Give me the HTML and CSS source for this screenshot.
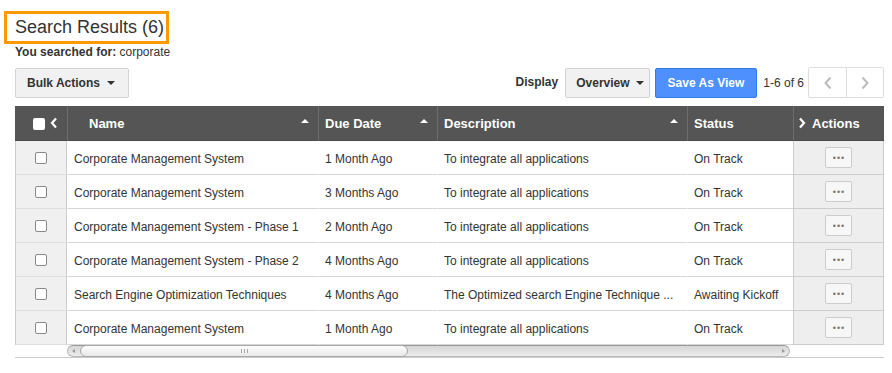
FILE: index.html
```html
<!DOCTYPE html>
<html lang="en">
<head>
  <meta charset="UTF-8" />
  <title>Search Results</title>
  <link rel="stylesheet" href="styles.css">
</head>
<body>
  <div class="title-row">
    <h1 class="title">Search Results (6)</h1>
  </div>
  <p class="searched"><b>You searched for:</b> corporate</p>

  <div class="toolbar">
    <button class="btn btn-bulk">Bulk Actions <span class="caret"></span></button>
    <div class="toolbar-right">
      <span class="display-label">Display</span>
      <button class="btn btn-view">Overview <span class="caret"></span></button>
      <button class="btn btn-blue">Save As View</button>
      <span class="count">1-6 of 6</span>
      <div class="pager">
        <button class="pager-btn"><svg width="10" height="14" viewBox="0 0 10 14"><path d="M7.5 1.5 L2.5 7 L7.5 12.5" fill="none" stroke="#bbb" stroke-width="2"/></svg></button>
        <button class="pager-btn"><svg width="10" height="14" viewBox="0 0 10 14"><path d="M2.5 1.5 L7.5 7 L2.5 12.5" fill="none" stroke="#bbb" stroke-width="2"/></svg></button>
      </div>
    </div>
  </div>

  <div class="grid">
    <div class="th th-check">
      <span class="head-box"></span>
      <svg width="8" height="12" viewBox="0 0 8 12"><path d="M6 1.5 L2 6 L6 10.5" fill="none" stroke="#fff" stroke-width="2.2"/></svg>
    </div>
    <div class="th th-name">Name <span class="sort"></span></div>
    <div class="th">Due Date <span class="sort"></span></div>
    <div class="th">Description <span class="sort"></span></div>
    <div class="th">Status</div>
    <div class="th th-actions">
      <svg width="8" height="12" viewBox="0 0 8 12"><path d="M2 1.5 L6 6 L2 10.5" fill="none" stroke="#fff" stroke-width="2.2"/></svg>
      Actions
    </div>

    <div class="td td-check"><span class="box"></span></div>
    <div class="td">Corporate Management System</div>
    <div class="td">1 Month Ago</div>
    <div class="td">To integrate all applications</div>
    <div class="td">On Track</div>
    <div class="td td-actions"><span class="dots">&bull;&bull;&bull;</span></div>

    <div class="td td-check"><span class="box"></span></div>
    <div class="td">Corporate Management System</div>
    <div class="td">3 Months Ago</div>
    <div class="td">To integrate all applications</div>
    <div class="td">On Track</div>
    <div class="td td-actions"><span class="dots">&bull;&bull;&bull;</span></div>

    <div class="td td-check"><span class="box"></span></div>
    <div class="td">Corporate Management System - Phase 1</div>
    <div class="td">2 Month Ago</div>
    <div class="td">To integrate all applications</div>
    <div class="td">On Track</div>
    <div class="td td-actions"><span class="dots">&bull;&bull;&bull;</span></div>

    <div class="td td-check"><span class="box"></span></div>
    <div class="td">Corporate Management System - Phase 2</div>
    <div class="td">4 Months Ago</div>
    <div class="td">To integrate all applications</div>
    <div class="td">On Track</div>
    <div class="td td-actions"><span class="dots">&bull;&bull;&bull;</span></div>

    <div class="td td-check"><span class="box"></span></div>
    <div class="td">Search Engine Optimization Techniques</div>
    <div class="td">4 Months Ago</div>
    <div class="td">The Optimized search Engine Technique ...</div>
    <div class="td">Awaiting Kickoff</div>
    <div class="td td-actions"><span class="dots">&bull;&bull;&bull;</span></div>

    <div class="td td-check"><span class="box"></span></div>
    <div class="td">Corporate Management System</div>
    <div class="td">1 Month Ago</div>
    <div class="td">To integrate all applications</div>
    <div class="td">On Track</div>
    <div class="td td-actions"><span class="dots">&bull;&bull;&bull;</span></div>
  </div>

  <div class="scroll-row">
    <div class="scrollbar">
      <span class="sb-arrow sb-left"></span>
      <div class="sb-thumb"><span class="grip"></span></div>
      <span class="sb-arrow sb-right"></span>
    </div>
  </div>
</body>
</html>
```

FILE: styles.css
```css
* {
  margin: 0;
  padding: 0;
  box-sizing: border-box;
}

body {
  font-family: "Liberation Sans", Arial, sans-serif;
  color: #333;
  background: #fff;
  padding: 0 8px 0 15px;
}

.title-row {
  padding-top: 11px;
  margin-left: -11px;
}

.title {
  display: inline-block;
  font-size: 18px;
  font-weight: normal;
  line-height: 27px;
  border: 3px solid #ff9900;
  padding: 0 2px 0 8px;
}

.searched {
  font-size: 12px;
  line-height: 15px;
  margin-top: 1px;
}

.toolbar {
  display: flex;
  justify-content: space-between;
  align-items: center;
  margin-top: 7px;
  width: 869px;
}

.toolbar-right {
  display: flex;
  align-items: center;
}

.btn {
  height: 30px;
  font-family: inherit;
  font-size: 12px;
  font-weight: bold;
  color: #333;
  background: #f1f1f1;
  border: 1px solid #d3d3d3;
  border-radius: 2px;
  padding: 0 10px;
  display: flex;
  align-items: center;
  gap: 7px;
}

.btn-bulk {
  padding: 0 13px 0 11px;
}

.btn-view {
  padding: 0 5px 0 10px;
  gap: 6px;
}

.caret {
  width: 0;
  height: 0;
  border-left: 4px solid transparent;
  border-right: 4px solid transparent;
  border-top: 4px solid #333;
}

.display-label {
  font-size: 12px;
  font-weight: bold;
  margin-right: 7px;
  margin-top: -2px;
}

.btn-blue {
  background: #4d90fe;
  border-color: #3079ed;
  color: #fff;
  padding: 0 12px;
  margin-left: 5px;
}

.count {
  font-size: 12px;
  margin: 0 4px 0 6px;
}

.pager {
  display: flex;
  border: 1px solid #ddd;
  border-radius: 2px;
}

.pager-btn {
  width: 37px;
  height: 29px;
  background: #fff;
  border: none;
  display: flex;
  align-items: center;
  justify-content: center;
}

.pager-btn + .pager-btn {
  border-left: 1px solid #ddd;
}

.grid {
  display: grid;
  grid-template-columns: 52px 251px 119px 250px 106px 91px;
  grid-auto-rows: 34px;
  grid-template-rows: 35px;
  margin-top: 8px;
  width: 869px;
  font-size: 12px;
}

.th {
  background: #555;
  color: #fff;
  font-weight: bold;
  font-size: 13px;
  display: flex;
  align-items: center;
  padding: 0 6px;
  border-left: 1px solid #6e6e6e;
  border-bottom: 1px solid #4a4a4a;
}

.th:first-child {
  border-left: none;
}

.th-check {
  justify-content: center;
  gap: 5px;
  padding-left: 14px;
}

.head-box {
  width: 12px;
  height: 12px;
  background: #fff;
  border-radius: 2px;
  margin-top: 2px;
}

.th-name {
  padding-left: 21px;
}

.sort {
  margin-left: auto;
  width: 0;
  height: 0;
  border-left: 4px solid transparent;
  border-right: 4px solid transparent;
  border-bottom: 4px solid #fff;
  margin-right: 3px;
  margin-top: -4px;
}

.th-actions {
  gap: 6px;
  padding-left: 4px;
}

.td {
  display: flex;
  align-items: center;
  padding: 2px 6px 0;
  border-bottom: 1px solid #d6d6d6;
  border-left: 1px solid #fff;
  white-space: nowrap;
  overflow: hidden;
}

.td-check {
  background: #f0f0f0;
  justify-content: center;
  padding-top: 0;
  border-left: 1px solid #ccc;
  border-right: 1px solid #ccc;
  border-bottom-color: #ddd;
}

.box {
  width: 12px;
  height: 12px;
  border: 1px solid #888;
  border-radius: 2px;
  background: #fff;
}

.td-actions {
  background: #eee;
  justify-content: center;
  padding-top: 0;
  border-left: 1px solid #ccc;
  border-right: 1px solid #ccc;
  border-bottom-color: #ccc;
}

.dots {
  width: 27px;
  height: 21px;
  background: #f7f7f7;
  border: 1px solid #ccc;
  border-radius: 2px;
  font-size: 9px;
  color: #777;
  letter-spacing: 1px;
  padding-left: 1px;
  display: flex;
  align-items: center;
  justify-content: center;
}

.scroll-row {
  width: 869px;
  height: 13px;
  border-bottom: 1px solid #ccc;
  padding-left: 52px;
  padding-right: 94px;
}

.scrollbar {
  height: 12px;
  display: flex;
  align-items: center;
  background: linear-gradient(#d6d6d6, #ececec);
  border: 1px solid #b8b8b8;
  border-top-color: #999;
  border-radius: 6px;
}

.sb-arrow {
  width: 12px;
  height: 10px;
  position: relative;
}

.sb-left::after,
.sb-right::after {
  content: "";
  position: absolute;
  top: 3px;
  width: 0;
  height: 0;
  border-top: 2px solid transparent;
  border-bottom: 2px solid transparent;
}

.sb-left::after {
  left: 4px;
  border-right: 3px solid #999;
}

.sb-right::after {
  left: 5px;
  border-left: 3px solid #999;
}

.sb-thumb {
  width: 328px;
  height: 12px;
  background: linear-gradient(#fdfdfd, #e9e9e9);
  border: 1px solid #a8a8a8;
  border-radius: 6px;
  display: flex;
  align-items: center;
  justify-content: center;
  margin-right: auto;
}

.grip {
  width: 7px;
  height: 4px;
  border-left: 1px solid #aaa;
  border-right: 1px solid #aaa;
  position: relative;
}

.grip::after {
  content: "";
  position: absolute;
  left: 2px;
  top: 0;
  width: 1px;
  height: 4px;
  background: #aaa;
}
```
